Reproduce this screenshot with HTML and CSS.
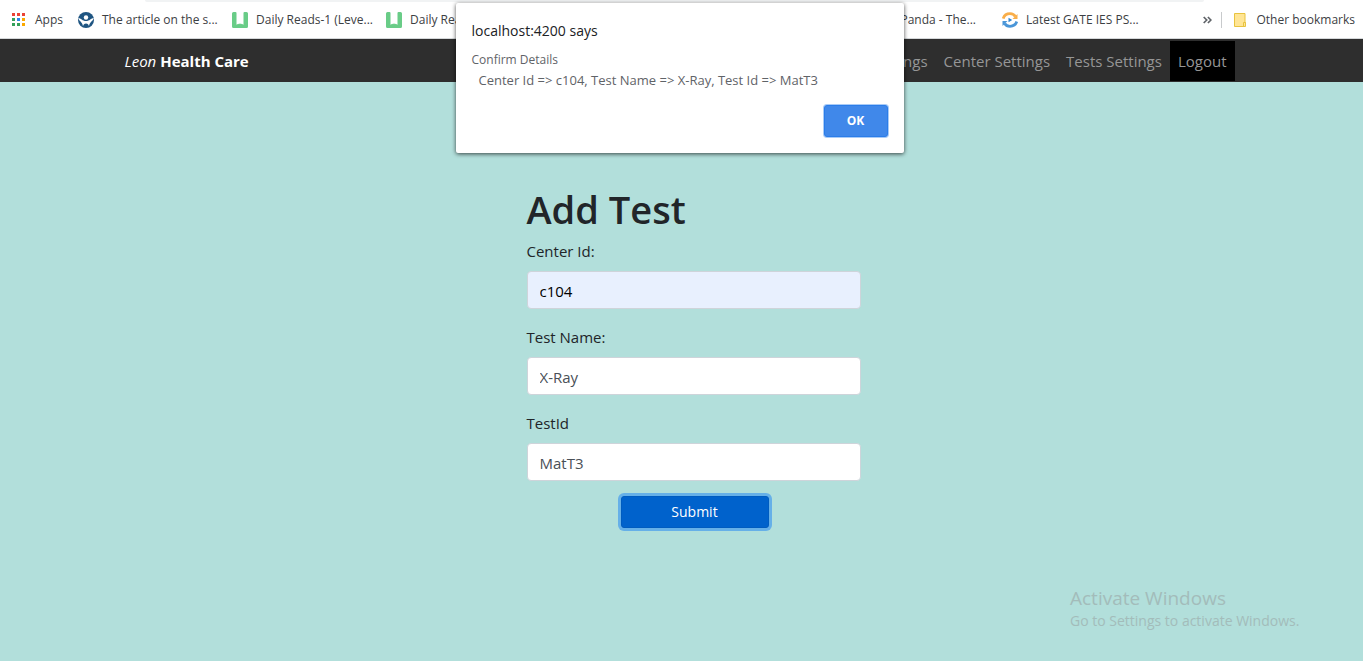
FILE: index.html
```html
<!DOCTYPE html>
<html lang="en">
<head>
<meta charset="utf-8">
<title>Leon Health Care</title>
<link rel="stylesheet" href="styles.css">
</head>
<body>
<div class="bookmarks">
  <div class="omnibox-edge"></div>
  <a class="bookmark apps" href="#">
    <svg width="14" height="14" viewBox="0 0 14 14"><path fill="#ea4335" d="M0 0h3v3H0zM5 0h3v3H5zM10 0h3v3h-3z"/><path fill="#34a05a" d="M0 5h3v3H0zM0 10h3v3H0zM5 10h3v3H5z"/><path fill="#2b85ea" d="M5 5h3v3H5z"/><path fill="#fba800" d="M10 5h3v3h-3zM10 10h3v3h-3z"/></svg>
    <span>Apps</span>
  </a>
  <div class="bookmark-list">
    <a class="bookmark" href="#">
      <svg width="16" height="16" viewBox="0 0 16 16"><circle cx="8" cy="8" r="8" fill="#1f5582"/><circle cx="8" cy="5.500" r="2.200" fill="#fff"/><path d="M.3 6c2.500.3 4.200 3 7.700 3s5.200-2.700 7.700-3c-.3 3-4.200 3.700-4.700 8.200-.5-1.700-1.300-2.700-3-2.700s-2.500 1-3 2.700C4.500 9.700.600 9 .3 6z" fill="#fff"/></svg>
      <span>The article on the s...</span>
    </a>
    <a class="bookmark" href="#">
      <svg width="16" height="16" viewBox="0 0 16 16"><path d="M0 1.500Q0 0 1.500 0H3.500Q4.500 0 4.500 1v11.700l1.800-1 .7.500 1-1 1 1 .7-.5 1.800 1V1q0-1 1-1h2Q16 0 16 1.500v13q0 1.500-1.500 1.500h-13Q0 16 0 14.500z" fill="#69cc87"/></svg>
      <span>Daily Reads-1 (Leve...</span>
    </a>
    <a class="bookmark" href="#">
      <svg width="16" height="16" viewBox="0 0 16 16"><path d="M0 1.500Q0 0 1.500 0H3.500Q4.500 0 4.500 1v11.700l1.800-1 .7.500 1-1 1 1 .7-.5 1.800 1V1q0-1 1-1h2Q16 0 16 1.500v13q0 1.500-1.500 1.500h-13Q0 16 0 14.500z" fill="#69cc87"/></svg>
      <span>Daily Reads</span>
    </a>
    <a class="bookmark trailing" href="#"><span>Panda - The...</span></a>
    <a class="bookmark" href="#">
      <svg width="16" height="16" viewBox="0 0 16 16" fill="none"><path d="M1.200 6.500C2.200 3.300 5 1.700 8 1.700c2.200 0 4.200.9 5.300 2.800" stroke="#f9ae49" stroke-width="2.800"/><path d="M15.500 2v5H10.500z" fill="#f9ae49"/><path d="M14.800 9.500C13.800 12.700 11 14.300 8 14.300c-2.200 0-4.200-.9-5.300-2.800" stroke="#4a96d8" stroke-width="2.800"/><path d="M.5 14V9H5.500z" fill="#4a96d8"/><path d="M6.500 5.800v4.400L10.200 8z" fill="#3486cf"/></svg>
      <span>Latest GATE IES PS...</span>
    </a>
  </div>
  <div class="bookmark-end">
    <button class="more" type="button" aria-label="More bookmarks"><svg width="9" height="8" viewBox="0 0 9 8" fill="none" stroke="#5f6368" stroke-width="1.700"><path d="M.7 1l3 3-3 3M4.900 1l3 3-3 3"/></svg></button>
    <a class="bookmark other" href="#">
      <svg width="12" height="14" viewBox="0 0 12 14"><path d="M.5.500h10.500v9h.500v4H.5z" fill="#ffe595" stroke="#e8c33f"/><path d="M9.500 13V9.500h2" fill="none" stroke="#e8c33f"/></svg>
      <span>Other bookmarks</span>
    </a>
  </div>
</div>

<header class="navbar">
  <div class="container">
    <a class="brand" href="#"><i>Leon</i> <b>Health Care</b></a>
    <nav class="links">
      <a href="#">User Settings</a>
      <a href="#">Center Settings</a>
      <a href="#">Tests Settings</a>
      <a class="logout" href="#">Logout</a>
    </nav>
  </div>
</header>

<main class="page">
  <form class="form">
    <h1>Add Test</h1>
    <div class="field">
      <label for="center">Center Id:</label>
      <input class="autofilled" id="center" type="text" value="c104">
    </div>
    <div class="field">
      <label for="name">Test Name:</label>
      <input id="name" type="text" value="X-Ray">
    </div>
    <div class="field">
      <label for="test">TestId</label>
      <input id="test" type="text" value="MatT3">
    </div>
    <button class="submit" type="button">Submit</button>
  </form>
</main>

<div class="dialog" role="alertdialog" aria-labelledby="dialog-title">
  <h2 id="dialog-title">localhost:4200 says</h2>
  <p>Confirm Details</p>
  <p class="details">Center Id =&gt; c104, Test Name =&gt; X-Ray, Test Id =&gt; MatT3</p>
  <button class="ok" type="button">OK</button>
</div>

<aside class="watermark">
  <p class="watermark-title">Activate Windows</p>
  <p>Go to Settings to activate Windows.</p>
</aside>
</body>
</html>
```
FILE: styles.css
```css
* { box-sizing: border-box; }

body {
  margin: 0;
  min-height: 100vh;
  display: flex;
  flex-direction: column;
  background: #b2dfdb;
  color: #212529;
  font: 15px/24px "Open Sans", "Noto Sans", sans-serif;
  overflow: hidden;
  position: relative;
}

h1, h2, p { margin: 0; }
a { color: inherit; text-decoration: none; }
button, input { font: inherit; }

.bookmarks {
  position: relative;
  height: 39px;
  flex: none;
  display: flex;
  align-items: center;
  padding: 1px 8px 0 12px;
  background: #fff;
  border-bottom: 1px solid #d5d8da;
  color: #3c4043;
  font-size: 12px;
  line-height: 16px;
  white-space: nowrap;
}

.omnibox-edge {
  position: absolute;
  top: 0;
  left: 145px;
  right: 159px;
  height: 2px;
  background: #f1f3f4;
  border-radius: 0 0 8px 8px;
}

.bookmark { display: flex; align-items: center; gap: 8px; }
.apps { width: 66px; gap: 9px; }
.bookmark-list { display: grid; grid-template-columns: repeat(7, 154px); }
.trailing { grid-column: 6; justify-content: flex-end; padding-right: 26px; }
.bookmark-end { display: flex; align-items: center; margin-left: auto; }
.more { display: flex; padding: 0; border: 0; background: none; }
.other {
  margin-left: 9px;
  padding-left: 12px;
  border-left: 1px solid #c8cacc;
  gap: 10px;
}

.navbar { background: #2e2e2e; padding: 2px 0 1px; flex: none; }

.container {
  max-width: 1140px;
  margin: 0 auto;
  padding: 0 17px 0 13px;
  display: flex;
  align-items: center;
  justify-content: space-between;
}

.brand { color: #fff; }
.links { display: flex; color: #969696; }
.links a { padding: 8px; }
.links .logout { background: #000; }

.page { flex: 1; padding: 103px 0 0 24px; }

.form {
  width: 334px;
  margin: 0 auto;
  display: flex;
  flex-direction: column;
}

h1 { font-size: 38px; font-weight: 600; line-height: 48px; margin-bottom: 6px; }
.field { display: flex; flex-direction: column; gap: 8px; margin-bottom: 16px; }
.field input {
  width: 100%;
  height: 38px;
  padding: 2px 12px 0;
  border: 1px solid #ced4da;
  border-radius: 4px;
  background: #fff;
  color: #495057;
}
.field .autofilled { background: #e8f0fe; color: #000; }

.submit {
  width: 148px;
  height: 32px;
  margin: -1px 0 0 94px;
  padding: 0;
  border: 1px solid #005cbf;
  border-radius: 3px;
  background: #0062cc;
  box-shadow: 0 0 0 3px #66b0e8;
  color: #fff;
  font-size: 14px;
}

.dialog {
  position: absolute;
  top: 3px;
  left: 50%;
  width: 448px;
  margin-left: -226px;
  padding: 16px;
  display: flex;
  flex-direction: column;
  background: #fff;
  border-radius: 2px;
  box-shadow: 0 1px 4px rgba(0, 0, 0, 0.7);
  color: #5f6368;
  font-size: 12px;
  line-height: 20px;
}

.dialog h2 { color: #202124; font-size: 14px; font-weight: 400; line-height: 24px; margin-bottom: 7px; }
.dialog .details { padding-left: 7px; font-size: 13px; white-space: nowrap; }

.ok {
  width: 64px;
  height: 32px;
  margin-top: 15px;
  align-self: flex-end;
  padding: 0;
  border: 1px solid #2b7de9;
  border-radius: 3px;
  background: #4088ea;
  box-shadow: 0 0 0 1px #a9cbf7;
  color: #fff;
  font-size: 12px;
  font-weight: 700;
}

.watermark {
  position: absolute;
  left: 1070px;
  bottom: 30px;
  color: #a3bcba;
  font-size: 14px;
  line-height: 20px;
  white-space: nowrap;
}
.watermark-title { font-size: 19px; line-height: 24px; margin-bottom: 1px; }
```
